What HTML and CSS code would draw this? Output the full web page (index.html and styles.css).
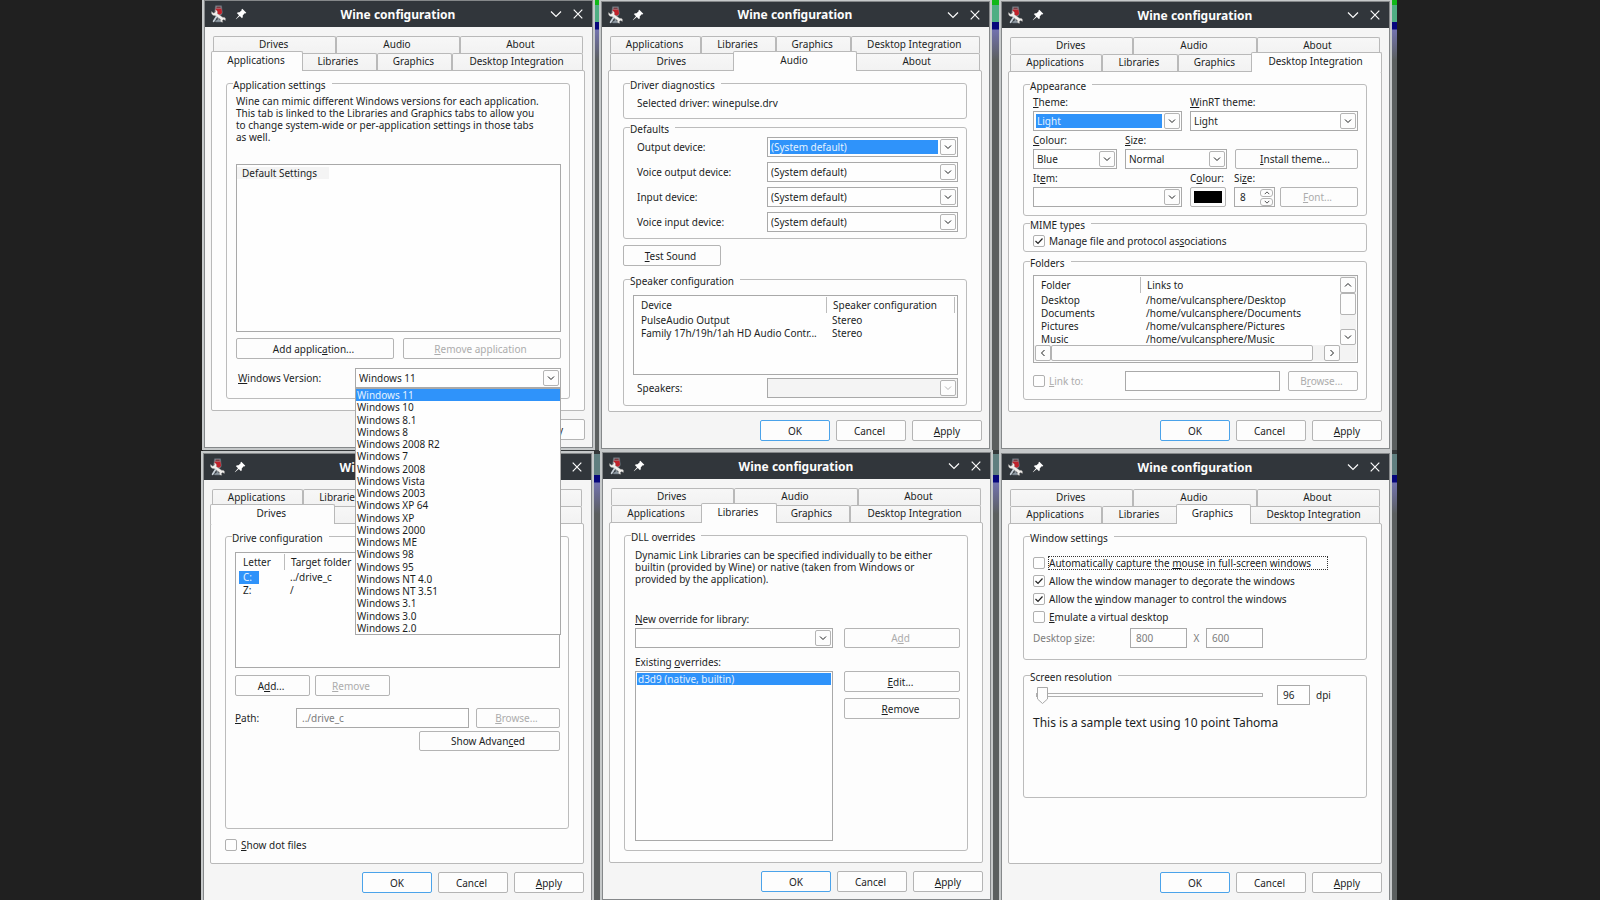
FILE: index.html
```html
<!DOCTYPE html>
<html lang="en">
<head>
<meta charset="utf-8">
<title>Wine configuration</title>
<link rel="stylesheet" href="styles.css">
</head>
<body>
<svg class="defs" aria-hidden="true">
  <symbol id="wine" viewBox="0 0 16 18">
    <path d="M5.500.8h6l.8 6.500c0 2-1.300 3-3 3.200v4l2.500 1.300c.4.8-.2 1.200-1 1.200H6c-.8 0-1.200-.8-.6-1.200l2.300-1.300v-4C6 10.300 4.700 9.300 4.700 7.300z" fill="#8f9aa3" stroke="#5c666e" stroke-width=".6"/>
    <path d="M5.600 3.500h5.900l.5 3.800c0 1.500-1.200 2.400-3.200 2.400S5.300 8.600 5.300 7.300z" fill="#c0222b"/>
    <path d="M6.500 1.500h4.200v1.500H6.400z" fill="#7b3c42"/>
    <path d="M1.500 6.500l2.300 1.700L5.500 7 5.300 4.800c2 .6 2.600 2.200 2 3.800l5.700 3.800c2-.4 3 1 2.400 3l-1.900-1-1.200 1 .5 1.900c-2 0-2.800-1.200-2.400-3L5 10.600C3 11 1 9.300 1.500 6.500z" fill="#f1efec" stroke="#8b8b8b" stroke-width=".4"/>
    <path d="M6.600 11.500l-3 4.800" stroke="#c9d2da" stroke-width="1.700" stroke-linecap="round"/>
  </symbol>
  <symbol id="pin" viewBox="0 0 12 12">
    <path d="M7.300.8l4 4-.9.700-.7-.2-2 2.200c.3 1.100 0 2-.7 2.700L4.800 8 1 11.300.8 11 4 7.200 1.800 5c.8-.7 1.700-1 2.700-.7l2.200-2-.2-.7z" fill="#fff"/>
  </symbol>
  <symbol id="down" viewBox="0 0 12 12"><path d="M1 3.500l5 5 5-5" fill="none" stroke="currentColor" stroke-width="1.200"/></symbol>
  <symbol id="close" viewBox="0 0 12 12"><path d="M1.700 1.700l8.600 8.600M10.300 1.700l-8.600 8.600" fill="none" stroke="currentColor" stroke-width="1.200"/></symbol>
  <symbol id="chev" viewBox="0 0 8 8"><path d="M1 2.500l3 3 3-3" fill="none" stroke="currentColor"/></symbol>
</svg>

<main class="desktop">

  <section class="window w1">
    <header class="titlebar">
      <svg class="logo"><use href="#wine"/></svg><svg class="pin"><use href="#pin"/></svg>
      <h1>Wine configuration</h1>
      <button class="ctl" aria-label="Minimise"><svg><use href="#down"/></svg></button><button class="ctl" aria-label="Close"><svg><use href="#close"/></svg></button>
    </header>
    <nav class="tabs">
      <div class="tabrow"><button>Drives</button><button>Audio</button><button>About</button></div>
      <div class="tabrow four"><button class="on">Applications</button><button>Libraries</button><button>Graphics</button><button>Desktop Integration</button></div>
    </nav>
    <div class="panel">
      <fieldset class="full">
        <legend>Application settings</legend>
        <div class="box apps">
          <p>Wine can mimic different Windows versions for each application.<br>This tab is linked to the Libraries and Graphics tabs to allow you<br>to change system-wide or per-application settings in those tabs<br>as well.</p>
          <div class="list applist"><span class="idle">Default Settings</span></div>
          <div class="pair"><button class="btn">Add applic<u>a</u>tion...</button><button class="btn" disabled><u>R</u>emove application</button></div>
          <div class="version">
            <label for="ver"><u>W</u>indows Version:</label>
            <div class="combo">
              <select id="ver"><option>Windows 11</option></select><span class="arrow"><svg><use href="#chev"/></svg></span>
              <ul class="popup" role="listbox" aria-label="Windows Version">
                <li class="on">Windows 11</li><li>Windows 10</li><li>Windows 8.1</li><li>Windows 8</li><li>Windows 2008 R2</li><li>Windows 7</li><li>Windows 2008</li><li>Windows Vista</li><li>Windows 2003</li><li>Windows XP 64</li><li>Windows XP</li><li>Windows 2000</li><li>Windows ME</li><li>Windows 98</li><li>Windows 95</li><li>Windows NT 4.0</li><li>Windows NT 3.51</li><li>Windows 3.1</li><li>Windows 3.0</li><li>Windows 2.0</li>
              </ul>
            </div>
          </div>
        </div>
      </fieldset>
    </div>
    <footer><button class="btn ok">OK</button><button class="btn">Cancel</button><button class="btn"><u>A</u>pply</button></footer>
  </section>

  <section class="window w2">
    <header class="titlebar">
      <svg class="logo"><use href="#wine"/></svg><svg class="pin"><use href="#pin"/></svg>
      <h1>Wine configuration</h1>
      <button class="ctl" aria-label="Minimise"><svg><use href="#down"/></svg></button><button class="ctl" aria-label="Close"><svg><use href="#close"/></svg></button>
    </header>
    <nav class="tabs">
      <div class="tabrow four"><button>Applications</button><button>Libraries</button><button>Graphics</button><button>Desktop Integration</button></div>
      <div class="tabrow"><button>Drives</button><button class="on">Audio</button><button>About</button></div>
    </nav>
    <div class="panel">
      <fieldset class="diag"><legend>Driver diagnostics</legend><p>Selected driver: winepulse.drv</p></fieldset>
      <fieldset class="defaults">
        <legend>Defaults</legend>
        <div class="box devices">
          <div class="dev"><label for="d1">Output device:</label><div class="combo hot"><select id="d1"><option>(System default)</option></select><span class="arrow"><svg><use href="#chev"/></svg></span></div></div>
          <div class="dev"><label for="d2">Voice output device:</label><div class="combo"><select id="d2"><option>(System default)</option></select><span class="arrow"><svg><use href="#chev"/></svg></span></div></div>
          <div class="dev"><label for="d3">Input device:</label><div class="combo"><select id="d3"><option>(System default)</option></select><span class="arrow"><svg><use href="#chev"/></svg></span></div></div>
          <div class="dev"><label for="d4">Voice input device:</label><div class="combo"><select id="d4"><option>(System default)</option></select><span class="arrow"><svg><use href="#chev"/></svg></span></div></div>
        </div>
      </fieldset>
      <button class="btn test"><u>T</u>est Sound</button>
      <fieldset class="speakers">
        <legend class="long">Speaker configuration</legend>
        <div class="box">
          <div class="list splist">
            <table>
              <colgroup><col class="c-device"><col></colgroup>
              <thead><tr><th>Device</th><th class="end">Speaker configuration</th></tr></thead>
              <tbody><tr><td>PulseAudio Output</td><td>Stereo</td></tr><tr><td>Family 17h/19h/1ah HD Audio Contr...</td><td>Stereo</td></tr></tbody>
            </table>
          </div>
          <div class="dev"><label for="d5">Speakers:</label><div class="combo off"><select id="d5" disabled></select><span class="arrow"><svg><use href="#chev"/></svg></span></div></div>
        </div>
      </fieldset>
    </div>
    <footer><button class="btn ok">OK</button><button class="btn">Cancel</button><button class="btn"><u>A</u>pply</button></footer>
  </section>

  <section class="window w3">
    <header class="titlebar">
      <svg class="logo"><use href="#wine"/></svg><svg class="pin"><use href="#pin"/></svg>
      <h1>Wine configuration</h1>
      <button class="ctl" aria-label="Minimise"><svg><use href="#down"/></svg></button><button class="ctl" aria-label="Close"><svg><use href="#close"/></svg></button>
    </header>
    <nav class="tabs">
      <div class="tabrow"><button>Drives</button><button>Audio</button><button>About</button></div>
      <div class="tabrow four"><button>Applications</button><button>Libraries</button><button>Graphics</button><button class="on">Desktop Integration</button></div>
    </nav>
    <div class="panel">
      <fieldset class="appearance">
        <legend>Appearance</legend>
        <div class="box looks">
          <div class="fields two">
            <div class="field"><label for="th"><u>T</u>heme:</label><div class="combo hot"><select id="th"><option>Light</option></select><span class="arrow"><svg><use href="#chev"/></svg></span></div></div>
            <div class="field"><label for="rt"><u>W</u>inRT theme:</label><div class="combo"><select id="rt"><option>Light</option></select><span class="arrow"><svg><use href="#chev"/></svg></span></div></div>
          </div>
          <div class="fields three">
            <div class="field"><label for="co"><u>C</u>olour:</label><div class="combo"><select id="co"><option>Blue</option></select><span class="arrow"><svg><use href="#chev"/></svg></span></div></div>
            <div class="field"><label for="si"><u>S</u>ize:</label><div class="combo"><select id="si"><option>Normal</option></select><span class="arrow"><svg><use href="#chev"/></svg></span></div></div>
            <button class="btn low"><u>I</u>nstall theme...</button>
          </div>
          <div class="fields items">
            <div class="field"><label for="it">It<u>e</u>m:</label><div class="combo"><select id="it"></select><span class="arrow"><svg><use href="#chev"/></svg></span></div></div>
            <div class="field"><label for="sw">C<u>o</u>lour:</label><button class="btn low swatch" id="sw" aria-label="Colour"><span></span></button></div>
            <div class="field"><label for="sz">Si<u>z</u>e:</label><div class="spin"><input id="sz" value="8"><span class="steps"><span class="up"><svg><use href="#chev"/></svg></span><span><svg><use href="#chev"/></svg></span></span></div></div>
            <button class="btn low" disabled><u>F</u>ont...</button>
          </div>
        </div>
      </fieldset>
      <fieldset class="mime">
        <legend>MIME types</legend>
        <div class="box"><label class="check"><input type="checkbox" checked><span>Manage file and protocol as<u>s</u>ociations</span></label></div>
      </fieldset>
      <fieldset class="folders">
        <legend>Folders</legend>
        <div class="box">
          <div class="list scroller">
            <div class="view">
              <table>
                <colgroup><col class="c-folder"><col></colgroup>
                <thead><tr><th>Folder</th><th>Links to</th></tr></thead>
                <tbody>
                  <tr><td>Desktop</td><td>/home/vulcansphere/Desktop</td></tr>
                  <tr><td>Documents</td><td>/home/vulcansphere/Documents</td></tr>
                  <tr><td>Pictures</td><td>/home/vulcansphere/Pictures</td></tr>
                  <tr><td>Music</td><td>/home/vulcansphere/Music</td></tr>
                </tbody>
              </table>
            </div>
            <div class="vbar"><span class="arrow up"><svg><use href="#chev"/></svg></span><span class="thumb"></span><span class="arrow"><svg><use href="#chev"/></svg></span></div>
            <div class="hbar"><span class="arrow left"><svg><use href="#chev"/></svg></span><span class="thumb"></span><span class="arrow right"><svg><use href="#chev"/></svg></span></div>
          </div>
          <div class="linkrow"><label class="check dim"><input type="checkbox" disabled><span><u>L</u>ink to:</span></label><input class="text" disabled aria-label="Link target"><button class="btn low" disabled>B<u>r</u>owse...</button></div>
        </div>
      </fieldset>
    </div>
    <footer><button class="btn ok">OK</button><button class="btn">Cancel</button><button class="btn"><u>A</u>pply</button></footer>
  </section>

  <section class="window w4">
    <header class="titlebar">
      <svg class="logo"><use href="#wine"/></svg><svg class="pin"><use href="#pin"/></svg>
      <h1>Wine configuration</h1>
      <button class="ctl" aria-label="Minimise"><svg><use href="#down"/></svg></button><button class="ctl" aria-label="Close"><svg><use href="#close"/></svg></button>
    </header>
    <nav class="tabs">
      <div class="tabrow four"><button>Applications</button><button>Libraries</button><button>Graphics</button><button aria-label="Desktop Integration"></button></div>
      <div class="tabrow"><button class="on">Drives</button><button aria-label="Audio"></button><button aria-label="About"></button></div>
    </nav>
    <div class="panel">
      <fieldset class="drives">
        <legend>Drive configuration</legend>
        <div class="box">
          <div class="list drlist">
            <table>
              <colgroup><col class="c-letter"><col></colgroup>
              <thead><tr><th>Letter</th><th>Target folder</th></tr></thead>
              <tbody><tr><td><span class="picked">C:</span></td><td>../drive_c</td></tr><tr><td>Z:</td><td>/</td></tr></tbody>
            </table>
          </div>
          <div class="adds"><button class="btn">A<u>d</u>d...</button><button class="btn" disabled><u>R</u>emove</button></div>
          <div class="pathrow"><label for="path"><u>P</u>ath:</label><input class="text" id="path" value="../drive_c" disabled><button class="btn low" disabled><u>B</u>rowse...</button></div>
          <button class="btn low advanced">Show Advan<u>c</u>ed</button>
        </div>
      </fieldset>
      <label class="check dots"><input type="checkbox"><span><u>S</u>how dot files</span></label>
    </div>
    <footer><button class="btn ok">OK</button><button class="btn">Cancel</button><button class="btn"><u>A</u>pply</button></footer>
  </section>

  <section class="window w5">
    <header class="titlebar">
      <svg class="logo"><use href="#wine"/></svg><svg class="pin"><use href="#pin"/></svg>
      <h1>Wine configuration</h1>
      <button class="ctl" aria-label="Minimise"><svg><use href="#down"/></svg></button><button class="ctl" aria-label="Close"><svg><use href="#close"/></svg></button>
    </header>
    <nav class="tabs">
      <div class="tabrow"><button>Drives</button><button>Audio</button><button>About</button></div>
      <div class="tabrow four"><button>Applications</button><button class="on">Libraries</button><button>Graphics</button><button>Desktop Integration</button></div>
    </nav>
    <div class="panel">
      <fieldset class="full">
        <legend>DLL overrides</legend>
        <div class="box dll">
          <p>Dynamic Link Libraries can be specified individually to be either<br>builtin (provided by Wine) or native (taken from Windows or<br>provided by the application).</p>
          <label for="lib"><u>N</u>ew override for library:</label>
          <div class="dllrow"><div class="combo"><select id="lib"></select><span class="arrow"><svg><use href="#chev"/></svg></span></div><button class="btn low" disabled>A<u>d</u>d</button></div>
          <label for="ovr">Existing <u>o</u>verrides:</label>
          <div class="dllrow"><div class="list ovlist" id="ovr"><span class="sel">d3d9 (native, builtin)</span></div><div class="stack"><button class="btn"><u>E</u>dit...</button><button class="btn"><u>R</u>emove</button></div></div>
        </div>
      </fieldset>
    </div>
    <footer><button class="btn ok">OK</button><button class="btn">Cancel</button><button class="btn"><u>A</u>pply</button></footer>
  </section>

  <section class="window w6">
    <header class="titlebar">
      <svg class="logo"><use href="#wine"/></svg><svg class="pin"><use href="#pin"/></svg>
      <h1>Wine configuration</h1>
      <button class="ctl" aria-label="Minimise"><svg><use href="#down"/></svg></button><button class="ctl" aria-label="Close"><svg><use href="#close"/></svg></button>
    </header>
    <nav class="tabs">
      <div class="tabrow"><button>Drives</button><button>Audio</button><button>About</button></div>
      <div class="tabrow four"><button>Applications</button><button>Libraries</button><button class="on">Graphics</button><button>Desktop Integration</button></div>
    </nav>
    <div class="panel">
      <fieldset class="wsettings">
        <legend>Window settings</legend>
        <div class="box checks">
          <label class="check focus"><input type="checkbox"><span>Automatically capture the <u>m</u>ouse in full-screen windows</span></label>
          <label class="check"><input type="checkbox" checked><span>Allow the window manager to de<u>c</u>orate the windows</span></label>
          <label class="check"><input type="checkbox" checked><span>Allow the <u>w</u>indow manager to control the windows</span></label>
          <label class="check"><input type="checkbox"><span><u>E</u>mulate a virtual desktop</span></label>
          <div class="sizerow"><label for="dw">Desktop <u>s</u>ize:</label><input class="text" id="dw" value="800" disabled><span>X</span><input class="text" value="600" aria-label="Desktop height" disabled></div>
        </div>
      </fieldset>
      <fieldset class="resolution">
        <legend>Screen resolution</legend>
        <div class="box">
          <div class="dpirow"><input type="range" min="0" max="100" value="0" aria-label="Screen resolution"><input class="text" id="dpi" value="96"><label for="dpi">dpi</label></div>
          <p class="sample">This is a sample text using 10 point Tahoma</p>
        </div>
      </fieldset>
    </div>
    <footer><button class="btn ok">OK</button><button class="btn">Cancel</button><button class="btn"><u>A</u>pply</button></footer>
  </section>

</main>
</body>
</html>
```

FILE: styles.css
```css
* { box-sizing: border-box; }

body {
  margin: 0;
  background: #202020;
  color: #1c1e1f;
  font: 10px/12px "Noto Sans", "DejaVu Sans Condensed", sans-serif;
  overflow: hidden;
}

button, input, select { font: inherit; color: inherit; margin: 0; }
p { margin: 0; }
u { text-decoration-thickness: 1px; text-underline-offset: 1px; }
.defs { position: absolute; width: 0; height: 0; }

/* desktop behind the windows */
.desktop {
  position: relative;
  height: 100vh;
  min-height: 900px;
  max-width: 1194px;
  margin: 0 auto;
  background:
    linear-gradient(#10b818, #10b818) 388px 0 / 12px 5px no-repeat,
    linear-gradient(#10b818, #10b818) 784px 0 / 14px 5px no-repeat,
    linear-gradient(#10b818, #10b818) 1186px 0 / 8px 5px no-repeat,
    linear-gradient(#1414f0, #1414f0) 397px 0 / 797px 3px no-repeat,
    linear-gradient(#2a2c2e, #2a2c2e) 0 0 / 388px 3px no-repeat,
    linear-gradient(#1818e0, #1818e0) 530px 451px / 150px 2px no-repeat,
    linear-gradient(#1818e0, #1818e0) 918px 451px / 150px 3px no-repeat,
    linear-gradient(#1818e0, #1818e0) 1128px 451px / 46px 3px no-repeat,
    linear-gradient(#34383a, #34383a) 0 450px / 100% 4px no-repeat,
    linear-gradient(#4fae83 0 22px, #06067c 22px 29px, #7272ae 30px, #5b5f5f 60px 450px, #607f80 453px 475px, #06067c 475px 482px, #7272ae 483px, #5b5f5f 514px);
}

.window {
  position: absolute;
  display: flex;
  flex-direction: column;
  width: 387px;
  height: 446px;
  background: #f5f5f5;
  box-shadow: 0 0 0 1px #85888a, 0 0 0 3px #c6c9ca;
}
.w1 { left: 2px; top: 1px; z-index: 2; }
.w2 { left: 399px; top: 2px; }
.w3 { left: 799px; top: 2px; }
.w4 { left: 1px; top: 454px; }
.w5 { left: 400px; top: 453px; }
.w6 { left: 799px; top: 454px; }

.titlebar {
  display: flex;
  align-items: center;
  height: 26px;
  padding: 0 3px 0 5px;
  background: #31363b;
  color: #fcfcfc;
}
.logo { width: 16px; height: 18px; }
.pin { width: 12px; height: 12px; margin-left: 9px; }
.titlebar h1 {
  flex: 1;
  margin: 0 0 0 4px;
  padding-top: 1px;
  text-align: center;
  font: bold 12px/16px "Noto Sans", sans-serif;
}
.ctl {
  width: 22px;
  height: 22px;
  padding: 5px;
  border: 0;
  background: none;
}
.ctl svg { display: block; width: 12px; height: 12px; }

/* tabs */
.tabs { padding: 9px 9px 0 8px; }
.tabrow { display: flex; height: 17px; align-items: flex-end; }
.tabrow button {
  flex: 1 1 0;
  height: 17px;
  padding: 0 2px 2px 0;
  border: 1px solid #b9b9b9;
  border-bottom: 0;
  border-radius: 2px 2px 0 0;
  background: linear-gradient(#f7f7f7, #f2f2f2);
  line-height: 14px;
  white-space: nowrap;
}
.tabrow.four button:nth-child(1) { flex-grow: 91; }
.tabrow.four button:nth-child(2) { flex-grow: 74; }
.tabrow.four button:nth-child(3) { flex-grow: 74; }
.tabrow.four button:nth-child(4) { flex-grow: 131; }
.tabrow button.on {
  position: relative;
  height: 20px;
  margin: 0 -2px -1px;
  padding-bottom: 3px;
  background: #fdfdfd;
}

.panel {
  display: flex;
  flex-direction: column;
  flex: 1;
  margin: 0 7px 0 6px;
  padding: 5px 14px;
  border: 1px solid #b9b9b9;
  border-radius: 2px;
  background: #fdfdfd;
}
footer { display: flex; justify-content: flex-end; gap: 6px; padding: 8px 7px 7px; }
footer .btn { width: 70px; }

fieldset {
  min-width: 0;
  margin: 0;
  padding: 0;
  border: 1px solid #bcbcbc;
  border-radius: 3px;
}
legend { margin-left: 6px; padding: 3px 6px 0 0; }
.box { padding: 0 8px 0 9px; }
.full { height: 323px; }

.btn {
  height: 21px;
  padding: 0 3px 0 0;
  border: 1px solid #b4b4b4;
  border-radius: 2px;
  background: #fdfdfd;
  color: #1c1e1f;
}
.btn.low { height: 20px; }
.btn.ok { padding: 0; border-color: #4ba3ea; }
footer .btn:last-child { padding: 0; }
.btn:disabled { color: #acacac; }

.list { border: 1px solid #a9a9a9; background: #fefefe; overflow: hidden; }

.combo {
  position: relative;
  display: flex;
  gap: 1px;
  height: 20px;
  padding: 1px;
  border: 1px solid #a9a9a9;
  background: #fefefe;
}
.combo select {
  appearance: none;
  flex: 1;
  min-width: 0;
  margin: 1px;
  padding: 0 1px;
  border: 0;
  border-radius: 0;
  background: none;
  line-height: 14px;
  opacity: 1;
}
.combo.hot select { background: #2f93fa; color: #e4f2ff; }
.combo.off select, .combo.off { background: #f4f4f4; }
.combo.off .arrow { color: #b5b5b5; }
.arrow {
  display: grid;
  place-items: center;
  flex: none;
  width: 16px;
  height: 16px;
  border: 1px solid #b4b4b4;
  border-radius: 2px;
  background: #fdfdfd;
}
.arrow svg { width: 8px; height: 8px; }
.arrow.up svg { transform: rotate(180deg); }
.arrow.left svg { transform: rotate(90deg); }
.arrow.right svg { transform: rotate(-90deg); }

.text {
  min-width: 0;
  height: 20px;
  padding: 0 5px;
  border: 1px solid #a9a9a9;
  border-radius: 0;
  background: #fefefe;
  line-height: 16px;
}
.text:disabled { color: #7c7c7c; }

.check { display: flex; align-items: center; gap: 4px; height: 14px; }
.check input {
  appearance: none;
  width: 12px;
  height: 12px;
  border: 1px solid #b0b0b0;
  border-radius: 2px;
  background: #fefefe;
}
.check input:checked {
  background: #fefefe url("data:image/svg+xml,%3Csvg xmlns='http://www.w3.org/2000/svg' viewBox='0 0 10 10'%3E%3Cpath d='M1.500 5l2.500 2.500L8.500 2.500' fill='none' stroke='%23222' stroke-width='1.200'/%3E%3C/svg%3E");
}
.check.dim { color: #acacac; }

table { width: 100%; border-collapse: collapse; table-layout: fixed; }
th {
  height: 18px;
  padding: 0 0 0 7px;
  font-weight: normal;
  text-align: left;
  background: linear-gradient(#bcbcbc, #bcbcbc) right 1px / 1px 16px no-repeat;
}
th + th { padding-left: 6px; background: none; }
th.end { background: linear-gradient(#bcbcbc, #bcbcbc) right 2px top 1px / 1px 16px no-repeat; }
td { height: 13px; padding: 0 0 0 7px; line-height: 13px; white-space: nowrap; }
td + td { padding-left: 5px; }
.c-device { width: 193px; }
.c-folder { width: 107px; }
.c-letter { width: 49px; }

/* applications */
.apps { padding-top: 4px; }
.applist { height: 168px; margin-top: 21px; padding: 2px 0; }
.idle { display: inline-block; padding: 0 12px 0 5px; background: #f4f4f4; }
.pair { display: grid; grid-template-columns: 1fr 1fr; gap: 9px; margin-top: 6px; }
.version { display: flex; align-items: center; margin-top: 9px; padding-left: 2px; }
.version label { width: 117px; }
.version .combo { flex: 1; }
.popup {
  position: absolute;
  left: -1px;
  right: -1px;
  top: 19px;
  display: grid;
  grid-auto-rows: 1fr;
  height: 247px;
  margin: 0;
  padding: 0;
  list-style: none;
  border: 1px solid #a9a9a9;
  background: #fefefe;
}
.popup li { padding-left: 1px; }
.popup .on { background: #2f93fa; color: #e4f2ff; }

/* audio */
.diag { height: 43px; margin-bottom: 1px; }
.diag p { padding: 6px 13px; }
.defaults { height: 119px; }
.devices { display: grid; gap: 5px; padding-top: 2px; }
.dev { display: flex; align-items: center; padding-left: 4px; }
.dev label { flex: 1; }
.dev .combo { width: 191px; }
.test { width: 98px; margin: 6px 0; }
.speakers { height: 134px; }
.speakers .box { padding-top: 8px; }
.splist { height: 80px; margin-bottom: 3px; }

/* desktop integration */
.appearance { height: 139px; }
.looks { display: grid; gap: 3px; padding-top: 4px; }
.fields { display: grid; gap: 8px; align-items: end; }
.two { grid-template-columns: 149px 1fr; }
.three { grid-template-columns: 84px 102px 1fr; }
.items { grid-template-columns: 149px 36px 41px 1fr; }
.items > .btn { margin-left: -3px; }
.field { display: grid; gap: 3px; min-width: 0; }
.swatch { padding: 3px; }
.swatch span { display: block; height: 12px; background: #000; }
.spin { display: flex; height: 20px; padding: 1px; border: 1px solid #a9a9a9; }
.spin input { flex: 1; width: 20px; padding: 0 4px; border: 0; background: none; }
.steps { display: grid; width: 13px; gap: 1px; }
.steps span { display: grid; place-items: center; border: 1px solid #b4b4b4; border-radius: 3px; }
.steps svg { width: 6px; height: 6px; }
.steps .up svg { transform: rotate(180deg); }
.mime { height: 36px; margin-bottom: 2px; }
.mime .box { padding-top: 3px; }
.folders { height: 146px; }
.folders .box { padding-top: 6px; }
.scroller { display: grid; grid-template: 1fr 16px / 1fr 16px; height: 88px; padding: 0 1px 1px 0; }
.view { min-height: 0; overflow: hidden; }
.vbar { display: flex; flex-direction: column; padding-top: 1px; background: #f3f3f3; }
.vbar .thumb { height: 22px; margin-bottom: auto; }
.hbar { display: flex; grid-column: 1 / -1; padding: 0 16px 0 1px; background: #f3f3f3; }
.hbar .thumb { width: 262px; margin-right: auto; }
.thumb { border: 1px solid #b4b4b4; border-radius: 2px; background: #fdfdfd; }
.linkrow { display: grid; grid-template-columns: 84px 155px 70px; justify-content: space-between; align-items: center; margin-top: 8px; }

/* drives */
.drives { height: 300px; margin-bottom: 9px; }
.drives .box { display: flex; flex-direction: column; padding-top: 8px; }
.drlist { height: 116px; }
.picked { display: block; width: 20px; margin-left: -4px; padding-left: 4px; background: #2f93fa; color: #e4f2ff; }
.adds { display: flex; gap: 5px; margin-top: 7px; }
.adds .btn { width: 75px; }
.pathrow { display: grid; grid-template-columns: 54px 173px 1fr; gap: 7px; align-items: center; margin-top: 12px; }
.advanced { width: 141px; margin-top: 3px; align-self: flex-end; }

/* libraries */
.dll { display: flex; flex-direction: column; padding: 6px 7px 0 10px; }
.dll p { margin-bottom: 28px; }
.dll label { margin-bottom: 3px; }
.dllrow { display: grid; grid-template-columns: 198px 1fr; gap: 11px; margin-bottom: 8px; }
.ovlist { height: 170px; padding: 1px; }
.sel { display: block; padding-left: 1px; background: #2f93fa; color: #e4f2ff; }
.stack { display: flex; flex-direction: column; gap: 6px; }

/* graphics */
.wsettings { height: 131px; margin-bottom: 8px; }
.checks { display: grid; gap: 4px; padding-top: 12px; }
.focus span { width: 278px; outline: 1px dotted #333; }
.sizerow { display: flex; align-items: center; color: #7c7c7c; }
.sizerow label { width: 97px; }
.sizerow .text { width: 57px; }
.sizerow span { width: 19px; text-align: center; }
.resolution { height: 130px; }
.resolution .box { padding-top: 2px; }
.dpirow { display: flex; align-items: center; }
.dpirow .text { width: 33px; margin: 0 6px 0 14px; }
.sample { margin-top: 11px; font-size: 12px; line-height: 14px; }
input[type="range"] { appearance: none; width: 230px; height: 18px; padding: 0 0 0 3px; background: none; }
input[type="range"]::-webkit-slider-runnable-track { height: 4px; border: 1px solid #b0b0b0; background: #fdfdfd; }
input[type="range"]::-webkit-slider-thumb {
  appearance: none;
  width: 11px;
  height: 17px;
  margin-top: -7px;
  background: url("data:image/svg+xml,%3Csvg xmlns='http://www.w3.org/2000/svg' viewBox='0 0 11 17'%3E%3Cpath d='M.5.5h10v11.500l-5 4.500-5-4.500z' fill='%23fdfdfd' stroke='%23a9a9a9'/%3E%3C/svg%3E");
}
```
